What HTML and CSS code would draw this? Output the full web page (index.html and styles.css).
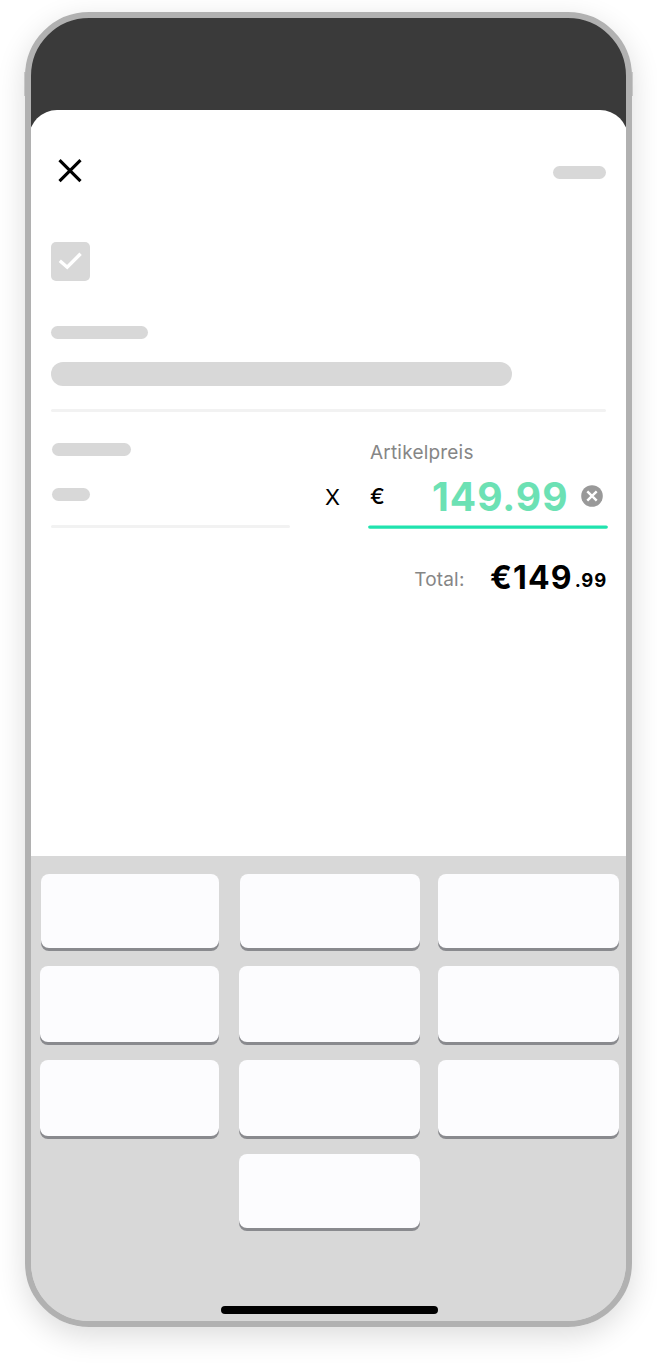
FILE: index.html
```html
<!DOCTYPE html>
<html lang="de">
<head>
<meta charset="utf-8">
<title>Artikelpreis</title>
<link rel="stylesheet" href="styles.css">
</head>
<body>
<div class="phone">
  <main class="sheet">
    <header class="header">
      <svg class="close" viewBox="0 0 24 24"><path d="M1.5 1.2 22.5 22.2M22.5 1.2 1.5 22.2"/></svg>
      <span class="bar bar-action"></span>
    </header>
    <div class="checkbox"><svg viewBox="0 0 39 39"><path d="M8.8 18.8 16.2 25.2 29.6 11.7"/></svg></div>
    <span class="bar bar-label"></span>
    <span class="bar bar-title"></span>
    <div class="rule"></div>
    <section class="fields">
      <div class="quantity">
        <span class="bar bar-quantity"></span>
        <span class="bar bar-count"></span>
        <div class="rule rule-quantity"></div>
      </div>
      <span class="times">X</span>
      <div class="price">
        <label class="price-label">Artikelpreis</label>
        <div class="price-row">
          <span class="currency">€</span>
          <span class="amount">149.99</span>
          <svg class="clear" viewBox="0 0 22 22"><circle cx="11" cy="11" r="10.8"/><path d="M6.3 6.3 15.7 15.7M15.7 6.3 6.3 15.7"/></svg>
        </div>
        <svg class="price-underline" viewBox="0 0 240 5"><path d="M1.8 2.1H238.2"/></svg>
      </div>
    </section>
    <div class="total">
      <span class="total-label">Total:</span>
      <span class="total-value">€149</span>
      <span class="total-cents">.99</span>
    </div>
  </main>
  <section class="keyboard">
    <div class="keys keys-first"><i class="key"></i><i class="key"></i><i class="key"></i></div>
    <div class="keys"><i class="key"></i><i class="key"></i><i class="key"></i></div>
    <div class="keys"><i class="key"></i><i class="key"></i><i class="key"></i></div>
    <div class="keys keys-last"><i class="key"></i></div>
    <div class="home-indicator"></div>
  </section>
</div>
</body>
</html>
```
FILE: styles.css
```css
* { box-sizing: border-box; }
body {
  margin: 0;
  padding: 12px 25px 38px;
  background: #fff;
  font-family: Inter, "Liberation Sans", sans-serif;
  overflow: hidden;
}
/* slim side bulge behind the upper edge of the frame */
body::before {
  content: "";
  position: absolute;
  z-index: -1;
  top: 72px;
  left: 24px;
  width: 609px;
  height: 24px;
  background: #d6d6d6;
}
.phone {
  width: 607px;
  height: 1315px;
  padding-top: 92px;
  border: 6px solid #b1b1b1;
  border-radius: 64px;
  background: linear-gradient(#3a3a3a 50%, #d8d8d8 50%);
  overflow: hidden;
  box-shadow: 0 9px 30px rgba(0, 0, 0, 0.14);
}
.sheet {
  height: 746px;
  margin: 0 -2px;
  padding: 49px 22px 0;
  border-radius: 28px 28px 0 0;
  background: #fff;
}
.header {
  display: flex;
  justify-content: space-between;
  height: 83px;
  padding-left: 7px;
}
.close { width: 24px; height: 24px; }
.close path { fill: none; stroke: #000; stroke-width: 3.1; }
.bar {
  display: block;
  height: 13px;
  border-radius: 12px;
  background: #d8d8d8;
}
.bar-action { width: 53px; margin-top: 7px; }
.checkbox {
  width: 39px;
  height: 39px;
  border-radius: 5px;
  background: #d8d8d8;
}
.checkbox svg { display: block; }
.checkbox path { fill: none; stroke: #fff; stroke-width: 3.4; }
.bar-label { width: 97px; margin-top: 45px; }
.bar-title { width: 461px; height: 24px; margin-top: 23px; }
.rule { height: 3px; margin-top: 23px; border-radius: 2px; background: #f2f2f2; }
.fields { display: flex; height: 117px; margin-right: -2px; }
.quantity { width: 239px; padding-top: 31px; }
.bar-quantity { width: 79px; margin-left: 1px; }
.bar-count { width: 38px; margin: 32px 0 0 1px; }
.rule-quantity { margin-top: 24px; }
.times {
  width: 78px;
  padding: 71px 0 0 35px;
  font-size: 22px;
  line-height: 28px;
}
.price { flex: 1; padding-top: 29px; }
.price-label {
  display: block;
  padding-left: 2px;
  font-size: 19px;
  line-height: 24px;
  letter-spacing: 0.2px;
  color: #868686;
}
.price-row {
  display: flex;
  align-items: center;
  height: 60px;
  padding: 2px 5px 0 2px;
}
.currency { font-size: 22px; font-weight: 500; line-height: 28px; }
.amount {
  margin-left: auto;
  padding-top: 2px;
  font-size: 39px;
  font-weight: 700;
  line-height: 48px;
  letter-spacing: 1px;
  color: #6ce1b4;
}
.clear { width: 22px; height: 22px; margin-left: 12.5px; }
.clear circle { fill: #999; }
.clear path { fill: none; stroke: #fff; stroke-width: 2.4; }
.price-underline { display: block; width: 240px; height: 5px; }
.price-underline path { stroke: #20e3ae; stroke-width: 3.4; stroke-linecap: round; }
.total {
  display: flex;
  justify-content: flex-end;
  align-items: flex-start;
  margin-right: -1px;
  padding-top: 28px;
}
.total-label {
  padding-top: 11px;
  font-size: 19px;
  line-height: 24px;
  letter-spacing: 0.2px;
  color: #868686;
}
.total-value {
  margin-left: 25.5px;
  font-size: 32px;
  font-weight: 700;
  line-height: 41px;
  letter-spacing: 1.1px;
}
.total-cents {
  padding: 11px 0 0 2px;
  font-size: 18.5px;
  font-weight: 700;
  line-height: 24px;
  letter-spacing: 0.8px;
}
.keyboard { height: 465px; padding: 18px 7px 7px 8.5px; background: #d8d8d8; }
.keys {
  display: grid;
  grid-template-columns: 181.5px 181px 181px;
  column-gap: 18px;
  margin-bottom: 15px;
}
.key {
  height: 76px;
  margin-bottom: 3px;
  border-radius: 8px;
  background: #fcfcfe;
  box-shadow: 0 3px 0 #898a8e;
}
.key:first-child { margin-right: 2px; }
.keys-first .key { height: 74px; }
.keys-first .key:first-child { margin-left: 1.5px; }
.keys-first .key:nth-child(2) { margin-left: 1.3px; }
.keys-last .key { grid-column: 2; height: 74px; margin-right: 0; }
.home-indicator {
  width: 217px;
  height: 8px;
  margin: 75px auto 0 181.5px;
  border-radius: 4px;
  background: #000;
}
```
